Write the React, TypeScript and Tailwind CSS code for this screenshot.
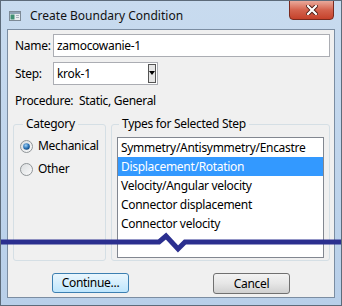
import React from "react";

const TYPES = [
  "Symmetry/Antisymmetry/Encastre",
  "Displacement/Rotation",
  "Velocity/Angular velocity",
  "Connector displacement",
  "Connector velocity",
];

function WindowIcon() {
  return (
    <svg width="12" height="10" viewBox="0 0 12 10" className="mt-[10px] ml-[2px] shrink-0">
      <rect x="0.5" y="0.5" width="11" height="9" fill="#e8ecef" stroke="#7d8a96" />
      <rect x="1" y="1" width="10" height="2" fill="#8fa3b6" />
      <rect x="1.5" y="3.5" width="4" height="5" fill="#3f8f73" />
      <rect x="7" y="4" width="3" height="1" fill="#a5b0ba" />
      <rect x="7" y="6" width="3" height="1" fill="#a5b0ba" />
    </svg>
  );
}

function Radio({ checked }: { checked?: boolean }) {
  return (
    <svg width="13" height="13" viewBox="0 0 13 13" className="shrink-0">
      <defs>
        <linearGradient id={checked ? "rg1" : "rg2"} x1="0" y1="0" x2="1" y2="1">
          <stop offset="0" stopColor="#d9dcde" />
          <stop offset="1" stopColor="#fbfbfb" />
        </linearGradient>
        <radialGradient id="dot" cx="0.4" cy="0.35" r="0.7">
          <stop offset="0" stopColor="#a4d2f5" />
          <stop offset="0.6" stopColor="#2a74b8" />
          <stop offset="1" stopColor="#0f3d6e" />
        </radialGradient>
      </defs>
      <circle cx="6.5" cy="6.5" r="6" fill={`url(#${checked ? "rg1" : "rg2"})`} stroke="#8f9497" />
      {checked && <circle cx="6.5" cy="6.5" r="3.3" fill="url(#dot)" />}
    </svg>
  );
}

export default function App() {
  return (
    <div
      className="relative w-[342px] h-[306px] overflow-hidden border border-[#5d6b7a] bg-gradient-to-b from-[#c8dbef] to-[#b8cfe9] px-[6px] pb-[7px] flex flex-col text-[12px] text-black"
      style={{ fontFamily: '"Noto Sans", "Open Sans", sans-serif' }}
    >
      {/* title bar */}
      <div className="h-[28px] shrink-0 flex items-start">
        <WindowIcon />
        <span className="ml-[9px] mt-[7px] text-[12px] leading-[16px] text-[#111]">Create Boundary Condition</span>
        <div className="ml-auto mr-[1px] -mt-[1px] w-[45px] h-[20px] rounded-b-[4px] border border-[#7a2a1e] bg-gradient-to-b from-[#e9a99b] via-[#d4624d] to-[#c5412a] flex items-center justify-center">
          <svg width="12" height="10" viewBox="0 0 12 10">
            <path d="M2 1 L10 9 M10 1 L2 9" stroke="#4a1a12" strokeWidth="4" strokeLinecap="square" />
            <path d="M2 1 L10 9 M10 1 L2 9" stroke="#ffffff" strokeWidth="2.2" strokeLinecap="square" />
          </svg>
        </div>
      </div>

      {/* client area */}
      <div className="flex-1 border border-[#7b8da2] bg-[#f0f0f0] flex flex-col tracking-[-0.3px]">
        <div className="mt-[4px] flex items-center">
          <span className="w-[45px] pl-[7px]">Name:</span>
          <div className="w-[277px] h-[23px] border border-[#abadb3] bg-white flex items-center pl-[3px]">
            zamocowanie-1
          </div>
        </div>

        <div className="mt-[5px] flex items-center">
          <span className="w-[45px] pl-[7px]">Step:</span>
          <div className="relative w-[105px] h-[23px] border border-[#abadb3] bg-white flex items-center pl-[3px]">
            krok-1
            <div className="absolute right-[1px] top-[1px] w-[8px] h-[19px] border border-[#555] bg-[#e6e6e6] flex items-end justify-center pb-[7px]">
              <div className="w-0 h-0 border-l-[3px] border-r-[3px] border-t-[4px] border-l-transparent border-r-transparent border-t-black" />
            </div>
          </div>
        </div>

        <div className="mt-[8px] flex items-center leading-[16px]">
          <span className="w-[71px] pl-[7px]">Procedure:</span>
          <span>Static, General</span>
        </div>

        <div className="mt-[7px] flex">
          <fieldset className="ml-[5px] w-[93px] h-[145px] border border-[#d5dfe5] rounded-[3px]">
            <legend className="ml-[9px] px-[3px] leading-[16px]">Category</legend>
            <div className="mt-[6px] pl-[6px] flex flex-col gap-[7px]">
              <label className="flex items-center gap-[5px] h-[16px]">
                <Radio checked />
                <span>Mechanical</span>
              </label>
              <label className="flex items-center gap-[5px] h-[16px]">
                <Radio />
                <span>Other</span>
              </label>
            </div>
          </fieldset>

          <fieldset className="ml-[5px] w-[219px] h-[145px] border border-[#d5dfe5] rounded-[3px]">
            <legend className="ml-[7px] px-[3px] leading-[16px]">Types for Selected Step</legend>
            <div className="mt-[5px] ml-[5px] w-[207px] h-[121px] border border-[#828790] bg-white flex flex-col">
              {TYPES.map((t, i) => (
                <div
                  key={t}
                  className={
                    i === 1
                      ? "h-[19px] shrink-0 flex items-center pl-[3px] bg-[#3399ff] text-white"
                      : "h-[19px] shrink-0 flex items-center pl-[3px]"
                  }
                >
                  {t}
                </div>
              ))}
            </div>
          </fieldset>
        </div>

        <div className="mt-[12px] flex">
          <button className="ml-[44px] w-[77px] h-[20px] rounded-[3px] border border-[#3c7fb1] bg-gradient-to-b from-[#eaf6fd] to-[#bee6fd] flex items-center justify-center">
            Continue...
          </button>
          <button className="ml-[84px] w-[77px] h-[21px] rounded-[3px] border border-[#707070] bg-gradient-to-b from-[#f3f3f3] via-[#e6e6e6] to-[#d0d0d0] flex items-center justify-center">
            Cancel
          </button>
        </div>
      </div>

      {/* break line annotation */}
      <svg className="absolute left-0 top-0 pointer-events-none" width="342" height="306" viewBox="0 0 342 306">
        <path
          d="M-2 241 H158 L165 235 L177 248 L184 241 H344"
          fill="none"
          stroke="#2b2f8f"
          strokeWidth="5"
          strokeLinejoin="miter"
        />
      </svg>
    </div>
  );
}
